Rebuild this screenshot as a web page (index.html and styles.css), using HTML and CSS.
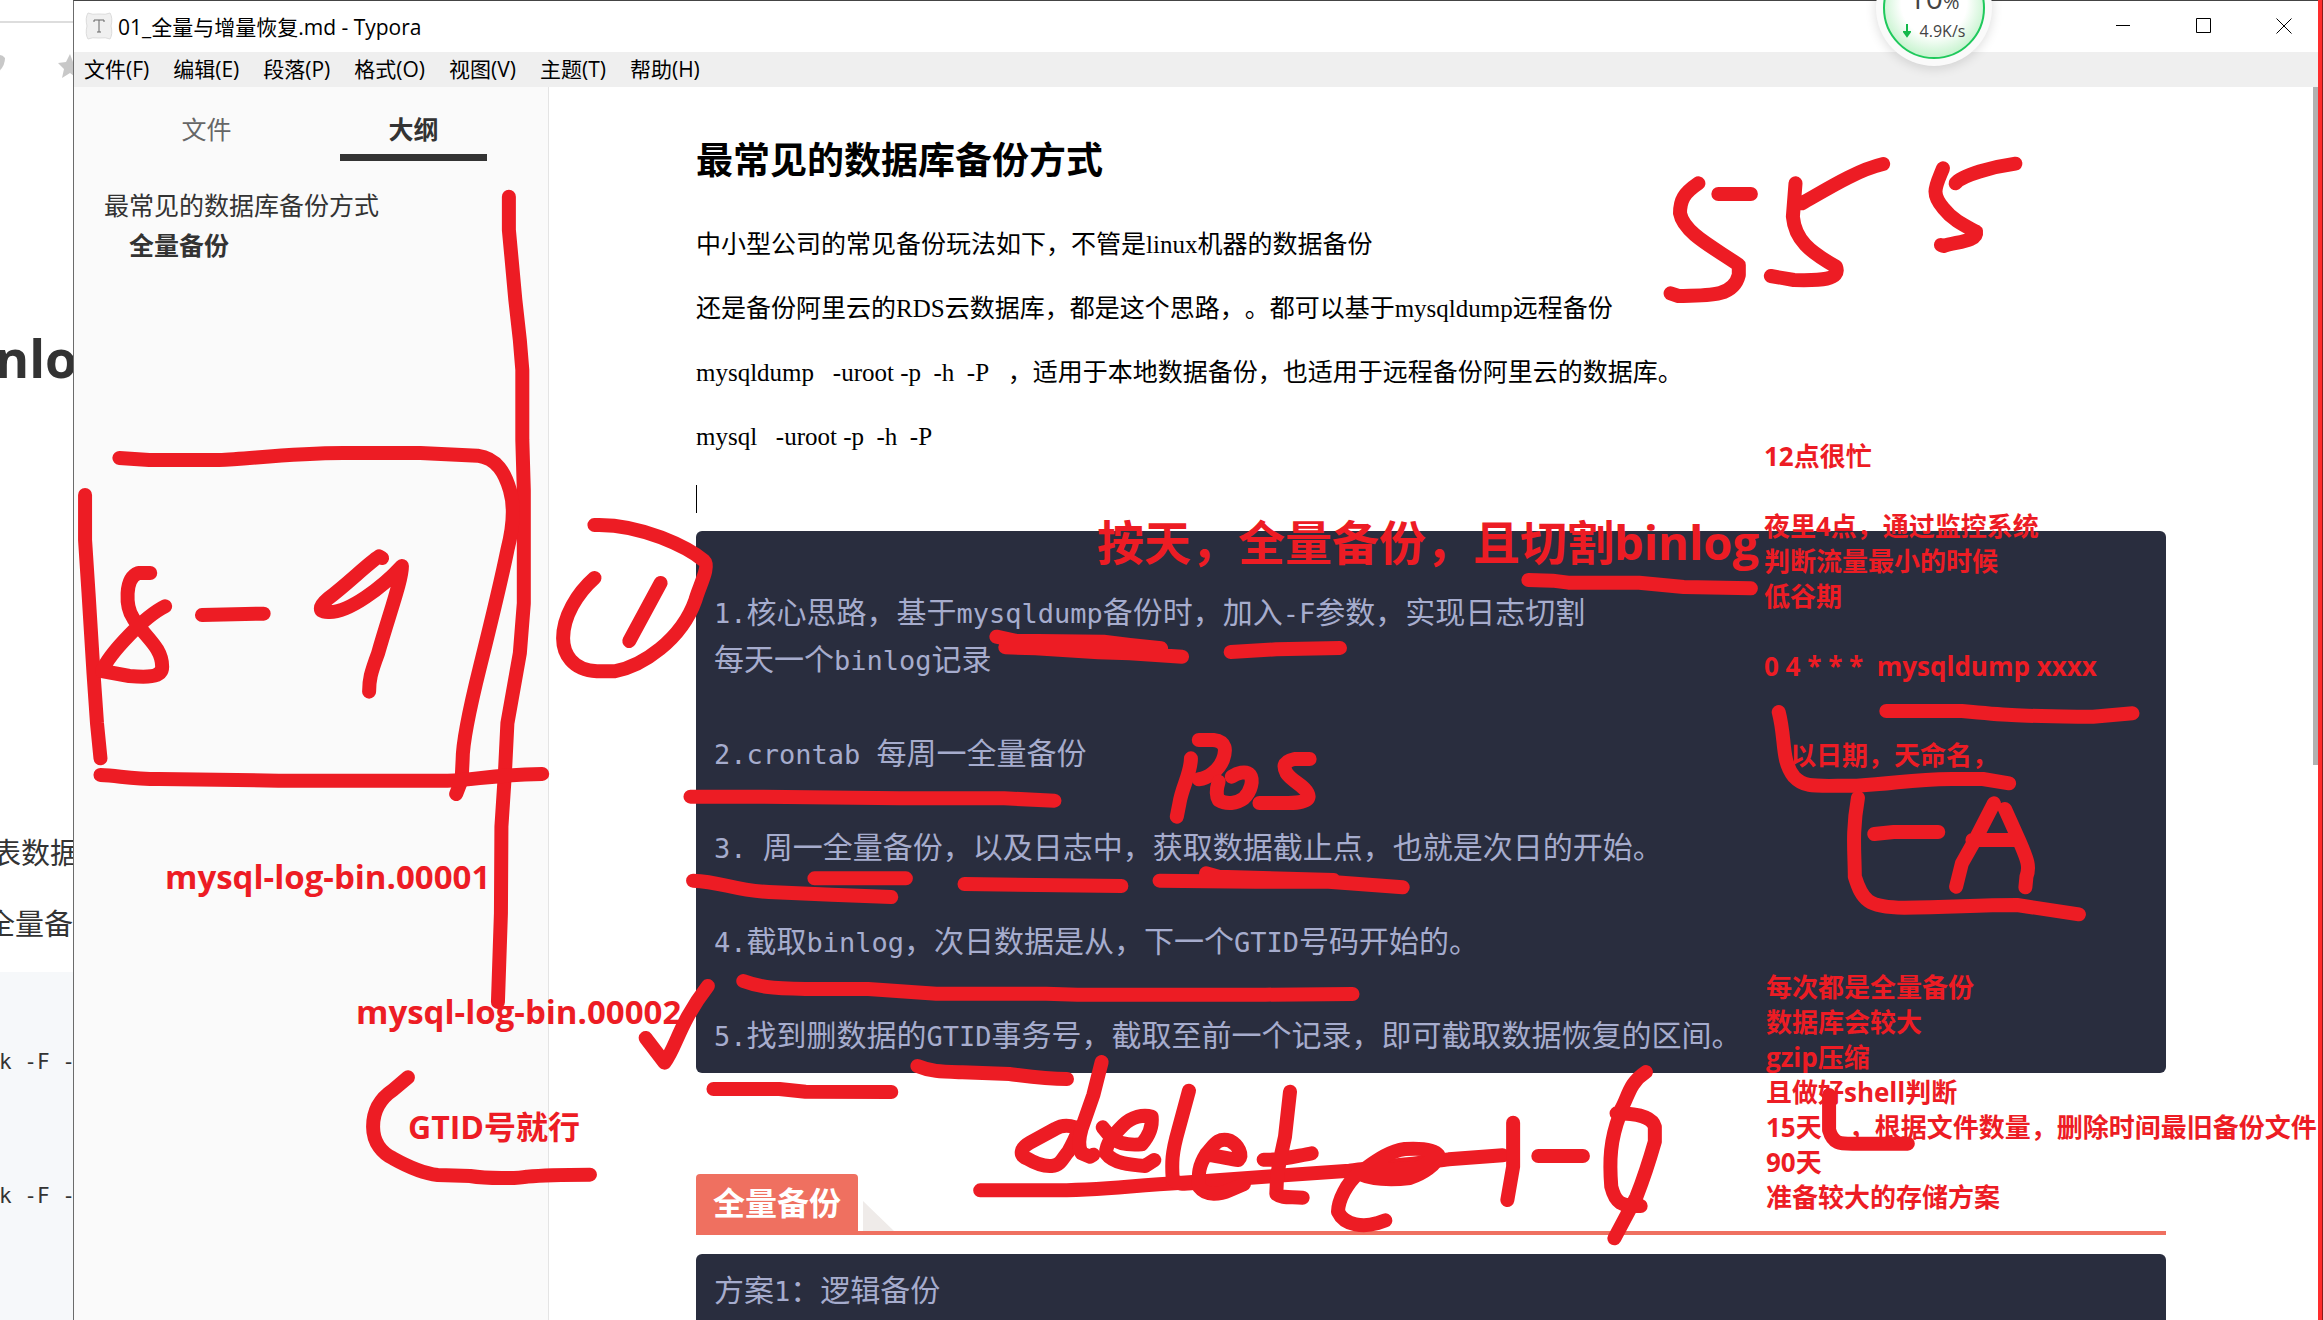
FILE: index.html
```html
<!DOCTYPE html>
<html lang="zh-CN">
<head>
<meta charset="utf-8">
<meta name="viewport" content="width=device-width, initial-scale=1">
<title>01_全量与增量恢复.md - Typora</title>
<link rel="stylesheet" href="styles.css">
</head>
<body>
<div class="desktop">
  <aside class="behind">
    <div class="behind-bar">
      <svg class="behind-icons" width="73" height="24" viewBox="0 0 73 24" aria-hidden="true">
        <path d="M-6 4 Q0 -2 5 4 Q5 13 -3 19Z"/>
        <path d="M70 0l3 8 8 1-6 6 2 9-7-5-8 5 2-9-6-6 8-1z"/>
      </svg>
    </div>
    <p class="behind-title">nlog</p>
    <p class="behind-text">表数据</p>
    <p class="behind-text behind-text-next">全量备</p>
    <div class="behind-code"><code>k -F -</code><code>k -F -</code></div>
  </aside>

  <div class="window">
    <header class="titlebar">
      <svg class="app-icon" width="28" height="28" viewBox="0 0 28 28" aria-hidden="true">
        <path d="M3 1q4 2 11 1 7 1 11-1 3 5 1 13 2 8-1 13-4-2-11-1-7-1-11 1-3-5-1-13-2-8 1-13z" fill="#f0f0f0" stroke="#dcdcdc"/>
        <path d="M9 10V8h10v2M14 8v12M12 20h4" fill="none" stroke="#666"/>
      </svg>
      <span class="title">01_全量与增量恢复.md - Typora</span>
      <div class="win-buttons">
        <button type="button" aria-label="最小化"><svg width="16" height="16" viewBox="0 0 16 16"><path d="M1 7.500h14"/></svg></button>
        <button type="button" aria-label="最大化"><svg width="16" height="16" viewBox="0 0 16 16"><path d="M.5.5h14v14H.5z"/></svg></button>
        <button type="button" aria-label="关闭"><svg width="16" height="16" viewBox="0 0 16 16"><path d="M.5.5l15 15M15.500.5l-15 15"/></svg></button>
      </div>
    </header>
    <nav class="menubar">
      <button type="button">文件(F)</button>
      <button type="button">编辑(E)</button>
      <button type="button">段落(P)</button>
      <button type="button">格式(O)</button>
      <button type="button">视图(V)</button>
      <button type="button">主题(T)</button>
      <button type="button">帮助(H)</button>
    </nav>
    <div class="workspace">
      <aside class="sidebar">
        <div class="tabs">
          <button type="button" class="tab">文件</button>
          <button type="button" class="tab tab-active">大纲</button>
        </div>
        <nav class="outline">
          <a href="#top">最常见的数据库备份方式</a>
          <a href="#full" class="outline-sub">全量备份</a>
        </nav>
      </aside>
      <main class="editor">
        <article class="doc">
          <h1 id="top">最常见的数据库备份方式</h1>
          <p>中小型公司的常见备份玩法如下，不管是linux机器的数据备份</p>
          <p>还是备份阿里云的RDS云数据库，都是这个思路，。都可以基于mysqldump远程备份</p>
          <p>mysqldump&nbsp;&nbsp; -uroot -p&nbsp; -h&nbsp; -P&nbsp;&nbsp; ，适用于本地数据备份，也适用于远程备份阿里云的数据库。</p>
          <p>mysql&nbsp;&nbsp; -uroot -p&nbsp; -h&nbsp; -P</p>
          <p class="caret-line"><span class="caret"></span></p>
<pre class="code code-plan"><b>1.</b>核心思路，基于<b>mysqldump</b>备份时，加入<b>-F</b>参数，实现日志切割
每天一个<b>binlog</b>记录

<b>2.crontab </b>每周一全量备份

<b>3. </b>周一全量备份，以及日志中，获取数据截止点，也就是次日的开始。

<b>4.</b>截取<b>binlog</b>，次日数据是从，下一个<b>GTID</b>号码开始的。

<b>5.</b>找到删数据的<b>GTID</b>事务号，截取至前一个记录，即可截取数据恢复的区间。</pre>
          <h2 id="full"><span>全量备份</span></h2>
<pre class="code code-next">方案<b>1</b>：逻辑备份</pre>
        </article>
      </main>
      <div class="scrollbar"><div class="thumb"></div></div>
    </div>
  </div>
  <div class="screen-edge"></div>

  <div class="speed">
    <div class="speed-ball">
      <span class="speed-load">10<small>%</small></span>
      <span class="speed-rate"><svg width="8" height="14" viewBox="0 0 8 14" aria-hidden="true"><path d="M4 0v12M1 8l3 4 3-4z"/></svg>4.9K/s</span>
    </div>
  </div>

  <p class="note note-log1">mysql-log-bin.00001</p>
  <p class="note note-log2">mysql-log-bin.00002</p>
  <p class="note note-gtid">GTID号就行</p>
  <p class="note note-daily">按天，全量备份，且切割binlog</p>
  <p class="note note-time">12点很忙<br><br>夜里4点，通过监控系统<br>判断流量最小的时候<br>低谷期<br><br>0 4 * * *&nbsp; mysqldump xxxx</p>
  <p class="note note-name">以日期，天命名，</p>
  <p class="note note-store">每次都是全量备份<br>数据库会较大<br>gzip压缩<br>且做好shell判断<br>15天&nbsp; &nbsp; ，根据文件数量，删除时间最旧备份文件<br>90天<br>准备较大的存储方案</p>

  <svg class="ink" width="2323" height="1320" viewBox="0 0 2323 1320" aria-hidden="true">
    <!-- strokes over the sidebar -->
    <g transform="scale(.49744 .33333)">
      <path d="M1023 590V690L1028 770 1036 900 1045 1020 1050 1110V1320L1053 1470V1810L1045 1960 1020 2170 1015 2320 1008 2480 1007 2740 1001 3006"/>
      <g transform="translate(0 1320)">
        <path d="M240 54L300 60H440C500 57 580 40 690 39L845 39 960 47C1000 55 1015 100 1025 150 1035 200 1032 260 1020 330 1005 440 985 560 965 680 945 800 930 900 930 960L928 1020 917 1062"/>
        <path d="M171 165V300L178 460 188 700 195 850 202 955"/>
        <path d="M202 1005C240 1007 260 1017 320 1017L560 1022H900C960 1020 980 1005 1090 1002"/>
        <path d="M302 399H278C250 415 252 500 268 535 290 590 326 620 326 680 326 715 290 712 260 708L205 693C220 640 290 530 332 499"/>
        <path d="M406 525L530 521"/>
        <path d="M768 354L762 349C740 370 700 430 660 475 640 500 640 515 660 516 700 520 770 440 808 378 808 420 785 510 760 640 745 700 742 720 742 755"/>
        <path d="M1195 255C1290 250 1385 325 1415 362 1428 380 1405 440 1398 480 1370 600 1290 680 1235 694H1200C1150 690 1132 640 1132 595 1132 530 1160 460 1195 414"/>
        <path d="M1328 429L1265 603"/>
      </g>
      <g transform="translate(0 2640)">
        <path d="M1298 474L1336 548C1360 500 1365 430 1423 318"/>
        <path d="M820 592L790 630C760 660 750 700 750 740 750 790 770 820 790 835 820 860 850 880 880 885L945 888C980 896 1040 896 1060 890 1100 884 1130 884 1186 884"/>
      </g>
    </g>
    <!-- strokes over the code block -->
    <g transform="translate(680 520) scale(.52296 .33333)">
      <path d="M605 350L640 362 810 365 860 375 920 385M622 382L680 385 800 397 860 400 960 410M640 372L920 398"/>
      <path d="M1053 396L1140 388 1262 384"/>
      <path d="M20 830H160L420 835H620L716 842"/>
      <path d="M977 715C977 760 960 800 955 850L950 890"/>
      <path d="M992 660H1020C1045 665 1045 690 1038 720 1030 750 1010 775 992 778"/>
      <path d="M1030 785C1025 810 1026 830 1030 840 1045 855 1065 850 1078 835 1092 815 1097 780 1090 765 1082 750 1065 760 1055 770"/>
      <path d="M1204 717H1175C1150 725 1155 745 1160 760 1170 785 1200 800 1202 830 1200 850 1170 849 1150 849H1108"/>
      <path d="M25 1082C80 1085 100 1110 170 1116L290 1124 404 1131"/>
      <path d="M257 1075H432M544 1092L844 1098"/>
      <path d="M917 1082L1100 1085H1240L1382 1102M1006 1060L1030 1070 1250 1080"/>
    </g>
    <g transform="translate(680 920) scale(.52296 .33333)">
      <path d="M121 183C150 200 170 205 240 207L360 207 490 221H700L760 224H1120L1286 222"/>
      <path d="M454 438C480 455 500 455 540 457L630 462C680 472 700 477 740 477"/>
      <path d="M64 507H190L240 515 404 516"/>
      <path d="M574 811H700C800 812 850 798 960 788L1280 752C1340 740 1440 725 1470 718L1573 706"/>
    </g>
    <!-- the struck-out word below it -->
    <g transform="translate(1000 1040) scale(.33333)">
      <path d="M225 262C205 255 185 255 165 267L90 308C60 325 58 345 80 355 105 370 130 380 155 378 185 375 190 350 205 335 215 315 232 290 235 262"/>
      <path d="M305 66L280 165 245 265C235 300 236 325 245 340L270 350 280 344"/>
      <path d="M308 262L335 295C360 315 400 315 425 313 445 290 458 260 455 230 430 222 395 230 370 255 340 285 318 310 318 340 340 370 390 375 435 378L463 360"/>
      <path d="M567 152L535 270C515 340 515 370 518 415 530 435 555 432 575 430"/>
      <path d="M625 345C660 348 690 358 715 360 730 345 715 315 690 302 650 290 640 320 620 340 595 380 595 400 597 440 620 470 660 463 690 450L732 432"/>
      <path d="M870 155L855 290C840 360 829 400 829 462 845 475 870 470 908 473M791 359C840 362 880 350 935 340"/>
      <path d="M1075 400C1120 420 1180 420 1230 414 1270 400 1310 375 1315 345 1300 325 1250 325 1215 327 1160 335 1120 370 1075 400 1040 430 1015 480 1014 515 1035 560 1095 560 1130 550L1156 541M1110 390L1250 385 1290 365"/>
    </g>
    <!-- strokes down the right side -->
    <g transform="translate(1500 0) scale(.52487 .33333)">
      <path d="M378 550C350 580 343 600 343 640 350 700 410 745 455 795V825C445 890 400 887 340 888L325 880M416 582H478"/>
      <path d="M563 550L558 650C562 720 590 755 640 800 650 840 610 842 560 840L516 828M575 610C620 570 680 510 730 492"/>
      <path d="M844 505C830 560 820 580 845 625 865 665 890 680 907 695 910 725 870 725 845 738L840 735M868 550C880 525 940 500 982 491"/>
    </g>
    <g transform="translate(1500 420) scale(.52487 .33333)">
      <path d="M54 480L100 482 130 488H265L350 501 478 505"/>
      <path d="M736 873H880C960 885 980 888 1100 890L1130 890 1205 880"/>
      <path d="M531 876C545 960 535 1020 560 1070 580 1105 600 1097 680 1097 760 1090 780 1078 860 1077H920L970 1090"/>
      <path d="M682 1133C670 1240 676 1300 676 1370 690 1440 700 1463 770 1463 860 1463 900 1455 985 1455L1103 1483"/>
      <path d="M713 1242L750 1236H835"/>
      <path d="M941 1150L905 1260 880 1330 869 1400M962 1167L990 1265C1005 1320 1010 1340 1003 1370L1001 1402M900 1260H985"/>
    </g>
    <g transform="translate(1500 900) scale(.52487 .33333)">
      <path d="M25 668V800L14 900M73 768H158"/>
      <path d="M278 516C245 550 245 590 230 630M222 640C260 640 290 650 295 680V725C285 780 275 830 260 890L218 1015M228 645C210 720 208 780 212 860 220 910 230 918 268 918"/>
      <path d="M627 585V690C635 735 650 731 680 731H777"/>
    </g>
  </svg>
</div>
</body>
</html>
```
FILE: styles.css
```css
* { box-sizing: border-box; }

body {
  margin: 0;
  font-family: "Open Sans", "Noto Sans CJK SC", sans-serif;
  color: #000;
  background: #fff;
  text-spacing-trim: space-all;
}

p, h1, h2, pre { margin: 0; }

button {
  border: 0;
  padding: 0;
  background: none;
  font: inherit;
  color: inherit;
}

.desktop {
  position: relative;
  display: grid;
  grid-template-columns: 73px minmax(0, 1fr) 5px;
  height: 100vh;
  overflow: hidden;
}

/* page behind the editor window */
.behind {
  display: flex;
  flex-direction: column;
  overflow: hidden;
  color: #333;
  white-space: nowrap;
}

.behind-bar {
  flex: none;
  height: 318px;
  padding-top: 21px;
}

.behind-bar::before {
  content: "";
  display: block;
  height: 2px;
  margin-bottom: 31px;
  background: #ddd;
}

.behind-icons { display: block; fill: #c8c8c8; }

.behind-title {
  margin-left: -5px;
  font-size: 52px;
  font-weight: 700;
  line-height: 80px;
}

.behind-text {
  margin: 434px 0 0 -8px;
  font-size: 29px;
  line-height: 42px;
}

.behind-text-next { margin: 29px 0 27px -14px; }

.behind-code {
  flex: 1;
  display: flex;
  flex-direction: column;
  gap: 94px;
  padding-top: 70px;
  background: #f6f8fa;
}

.behind-code code {
  margin-left: -1px;
  font: 21px/40px "DejaVu Sans Mono", monospace;
}

/* editor window */
.window {
  display: flex;
  flex-direction: column;
  min-width: 0;
  min-height: 0;
  border-left: 1px solid #6b6b6b;
  border-top: 1px solid #444;
}

.titlebar {
  flex: none;
  display: flex;
  align-items: center;
  height: 51px;
  padding: 0 0 2px 11px;
  font-size: 21px;
}

.app-icon { margin-right: 5px; }

.title { flex: 1; }

.win-buttons { display: flex; }

.win-buttons button {
  display: grid;
  place-items: center;
  width: 81px;
  height: 49px;
}

.win-buttons button:last-child { padding-left: 12px; }
.win-buttons button:nth-child(2) { padding-left: 14px; }
.win-buttons button:first-child { padding-left: 14px; }

.win-buttons path { fill: none; stroke: #000; }

.menubar {
  flex: none;
  display: flex;
  gap: 24px;
  height: 35px;
  padding-left: 10px;
  background: #efefef;
  font-size: 21px;
  line-height: 35px;
}

.workspace {
  flex: 1;
  display: flex;
  min-height: 0;
}

.sidebar {
  flex: none;
  width: 475px;
  border-right: 1px solid #e4e4e4;
  background: #fafafa;
  color: #333;
  font-size: 25px;
}

.tabs {
  display: flex;
  justify-content: space-between;
  padding: 10px 61px 0 59px;
}

.tab {
  width: 147px;
  height: 64px;
  padding-top: 4px;
  border-bottom: 7px solid transparent;
  color: #666;
}

.tab-active {
  border-color: #333;
  color: #333;
  font-weight: 700;
}

.outline {
  display: flex;
  flex-direction: column;
  padding: 24px 0 0 30px;
  line-height: 40px;
}

.outline a { color: inherit; text-decoration: none; }
.outline .outline-sub { padding-left: 25px; font-weight: 700; }

.editor {
  flex: 1;
  min-width: 0;
  overflow: hidden;
}

.doc {
  width: 84%;
  max-width: 1470px;
  margin: 0 auto;
  padding-top: 49px;
  font: 25px/40px "Liberation Serif", "Noto Sans CJK SC", serif;
}

.doc h1 {
  margin-bottom: 37px;
  font-size: 37px;
  line-height: 52px;
}

.doc p { margin: 0 0 24px; white-space: nowrap; }

.doc .caret-line {
  display: flex;
  align-items: center;
  height: 36px;
  margin-bottom: 14px;
}

.caret { width: 1px; height: 28px; background: #000; }

.code {
  border-radius: 6px;
  background: #292d3e;
  color: #a6accd;
  font: 30px/47px "Noto Sans CJK SC", sans-serif;
}

.code b { font: 27px/1 "DejaVu Sans Mono", monospace; }

.code-plan { padding: 56px 18px 16px; }
.code-next { padding: 11px 18px 60px; }

.doc h2 {
  display: flex;
  align-items: flex-end;
  gap: 5px;
  margin: 101px 0 19px;
  border-bottom: 4px solid #ef7060;
}

.doc h2 span {
  padding: 4px 17px 0;
  border-radius: 4px 4px 0 0;
  background: #ef7060;
  color: #fff;
  font-size: 32px;
  line-height: 53px;
}

.doc h2::after {
  content: "";
  border-left: 31px solid #efebe9;
  border-top: 30px solid transparent;
}

.scrollbar { flex: none; width: 5px; }
.thumb { height: 55%; background: #b1b1b1; }

.screen-edge {
  border-right: 1px solid #8a1a1a;
  background: #ff2d2d;
}

/* network speed ball docked to the top of the screen */
.speed {
  position: absolute;
  left: 1876px;
  top: -50px;
  width: 116px;
  height: 116px;
  padding: 7px;
  border-radius: 50%;
  background: #fafafa;
  box-shadow: 0 2px 12px rgba(0, 0, 0, .14);
}

.speed-ball {
  display: flex;
  flex-direction: column;
  align-items: center;
  height: 102px;
  padding-top: 20px;
  border: 2px solid #1fc95c;
  border-radius: 50%;
  background: radial-gradient(circle at 50% 45%, #fff 45%, #c5f3cd 75%);
  color: #444;
}

.speed-load { font-size: 30px; line-height: 38px; }
.speed-load small { font-size: 20px; }

.speed-rate {
  display: flex;
  align-items: center;
  gap: 9px;
  font-size: 16px;
  line-height: 20px;
}

.speed-rate path { fill: #12b84a; stroke: #12b84a; stroke-width: 2; }

/* presenter's notes and pen strokes over the screen */
.note {
  position: absolute;
  color: #ed1c24;
  font-size: 26px;
  font-weight: 700;
  line-height: 35px;
  white-space: nowrap;
}

.note-log1, .note-log2 { font-size: 33px; line-height: 44px; }
.note-log1 { left: 165px; top: 855px; }
.note-log2 { left: 356px; top: 990px; }
.note-gtid { left: 408px; top: 1105px; font-size: 32px; line-height: 44px; }
.note-daily { left: 1097px; top: 510px; font-size: 47px; line-height: 64px; }
.note-time { left: 1764px; top: 439px; }
.note-name { left: 1790px; top: 738px; }
.note-store { left: 1766px; top: 970px; }

.ink {
  position: absolute;
  left: 0;
  top: 0;
  pointer-events: none;
}

.ink path {
  fill: none;
  stroke: #ed1c24;
  stroke-width: 14px;
  stroke-linecap: round;
  stroke-linejoin: round;
  vector-effect: non-scaling-stroke;
}
```
